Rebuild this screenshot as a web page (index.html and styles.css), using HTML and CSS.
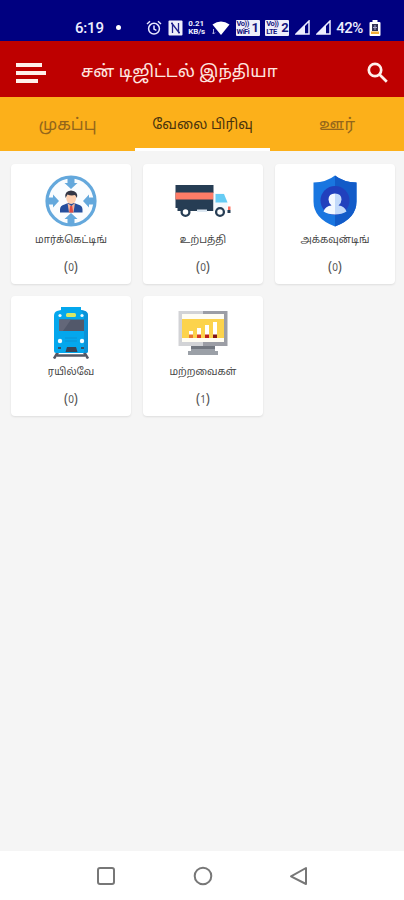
FILE: index.html
```html
<!DOCTYPE html>
<html lang="ta">
<head>
<meta charset="utf-8">
<title>சன் டிஜிட்டல் இந்தியா</title>
<link rel="stylesheet" href="styles.css">
</head>
<body>
<div class="status">
  <span class="time">6:19</span>
  <span class="dot"></span>
  <div class="status-icons">
    <svg width="16" height="16" viewBox="0 0 16 16" fill="none" stroke="#e8e8ff" stroke-width="1.5"><circle cx="8" cy="8.7" r="5.4"/><path d="M1 4l3-2.7M15 4l-3-2.7M8 5.5v3.6l2.4 1.3"/></svg>
    <svg width="15" height="16" viewBox="0 0 15 16"><rect x=".5" y=".5" width="14" height="15" rx="1" fill="#eeeefa"/><path d="M4.500 13V4l6 8V3M3 3.500h2M10 12.500h2" fill="none" stroke="#20208c" stroke-width="1.300"/></svg>
    <span class="speed"><b>0.21</b><b>KB/s</b></span>
    <svg width="18" height="14" viewBox="0 0 18 14"><path d="M.5 3.500Q9-2.500 17.500 3.500L9 14z" fill="#fff"/><path d="M1.500 8v5M0 11.500l1.500 1.500L3 11.500" stroke="#aaaada" fill="none"/></svg>
    <span class="volte"><span><b>Vo))</b><b>WiFi</b></span><i>1</i></span>
    <span class="volte"><span><b>Vo))</b><b>LTE</b></span><i>2</i></span>
    <svg width="15" height="15" viewBox="0 0 15 15"><path d="M14 1v13H1z" fill="none" stroke="#eeeeff" stroke-width="1.500"/><path d="M10 5v9H1z" fill="#eeeeff"/></svg>
    <svg width="15" height="15" viewBox="0 0 15 15"><path d="M14 1v13H1z" fill="none" stroke="#eeeeff" stroke-width="1.500"/><path d="M10 5v9H1z" fill="#eeeeff"/></svg>
    <span class="percent">42%</span>
    <svg width="12" height="16" viewBox="0 0 12 16"><path d="M3.500 0h5v2h2q1 0 1 1v12q0 1-1 1h-9q-1 0-1-1V3q0-1 1-1h2z" fill="#fff"/><path d="M3 4h6v7H3z" fill="#333354"/><path d="M2 11.500h8V14H2z" fill="#f3ae38"/><path d="M6 5v5M4 7.500h4" stroke="#aaaacb"/></svg>
  </div>
</div>
<header class="bar">
  <div class="menu"><i></i><i></i><i></i></div>
  <h1>சன் டிஜிட்டல் இந்தியா</h1>
  <svg class="search" width="22" height="22" viewBox="0 0 22 22" fill="none" stroke="#fff0eb" stroke-width="2.700"><circle cx="8" cy="8" r="6.200"/><path d="M12.500 12.500l7.300 7.300"/></svg>
</header>
<nav class="tabs">
  <div class="tab">முகப்பு</div>
  <div class="tab active">வேலை பிரிவு</div>
  <div class="tab">ஊர்</div>
</nav>
<main class="grid">
  <div class="card">
    <svg width="52" height="52" viewBox="0 0 52 52"><circle cx="26" cy="26" r="24" fill="#fafcfe" stroke="#64a8dc" stroke-width="3.200"/><g fill="#64a8dc"><path id="arrow" d="M22.500 2h7v6h3L26 14l-6.500-6h3z"/><use href="#arrow" transform="rotate(90 26 26)"/><use href="#arrow" transform="rotate(180 26 26)"/><use href="#arrow" transform="rotate(270 26 26)"/></g><path d="M15 37.500v-3q0-4 4.500-5L23 28h6l4 1.500q4.500 1 4.500 5v3z" fill="#254e9d"/><path d="M22.500 28l3.800 3 3.700-3-1.500 9.500h-4.500z" fill="#f0b29c"/><path d="M25.200 31h2l1 6.500h-4z" fill="#df4c45"/><ellipse cx="26.200" cy="23" rx="5" ry="6" fill="#ffd0b0"/><path d="M20.500 23q-1.500-7 5.500-7.500 7.500.5 6 7.500l-2-3q-4 1-7.500-.5z" fill="#353745"/></svg>
    <p>மார்க்கெட்டிங்</p><small>(<b>0</b>)</small>
  </div>
  <div class="card">
    <svg width="56" height="52" viewBox="0 0 56 52"><path d="M.5 10h38v26H2.500v-3h-2z" fill="#263d54"/><path d="M.5 17.500h38v7H.5z" fill="#ff7c67"/><path d="M38.500 18h10l4 9v9h-14z" fill="#f5f9fc"/><path d="M40.500 19h8.500l3.500 8.500h-12z" fill="#66ccf4"/><path d="M22 34.500h10v2.500H22z" fill="#dce7f1"/><g fill="#fff" stroke="#263d54" stroke-width="2.300"><circle cx="10.500" cy="37" r="3.900"/><circle cx="45" cy="37" r="3.900"/></g><path d="M53 31.500h2.500V35H53z" fill="#ff705f"/><path d="M52.500 35h3v3h-3z" fill="#263d54"/></svg>
    <p>உற்பத்தி</p><small>(<b>0</b>)</small>
  </div>
  <div class="card">
    <svg width="44" height="52" viewBox="0 0 44 52"><path d="M22 .5q8 6.500 21.500 7v19q0 17-21.500 25Q.5 43.500.5 26.500v-19Q14 7 22 .5z" fill="#1976e0"/><path d="M22 .5q8 6.500 21.500 7v19q0 17-21.500 25z" fill="#125bc8"/><circle cx="22" cy="25.500" r="14.500" fill="#2140bd"/><path d="M22 18.500q-6.500 0-6.500 6 0 3.500 3 6-6 .5-8 6Q15 39.500 22 39.500z" fill="#f2f8ff"/><path d="M22 18.500q6.500 0 6.500 6 0 3.500-3 6 6 .5 8 6Q29 39.500 22 39.500z" fill="#c3dafa"/></svg>
    <p>அக்கவுன்டிங்</p><small>(<b>0</b>)</small>
  </div>
  <div class="card">
    <svg width="36" height="52" viewBox="0 0 36 52"><path d="M5 45l-4 6.500M31 45l4 6.500M4 48.500h28" stroke="#555866" stroke-width="2.600"/><path d="M8 0h20v3l4 1q3 1 3 5v35q0 2-2 2H3q-2 0-2-2V9q0-4 3-5l4-1z" fill="#04a7ed"/><path d="M28 3l4 1q3 1 3 5v35q0 2-2 2h-2V8z" fill="#0b92d7"/><path d="M6 12.500h25V24H6z" fill="#52586a"/><path d="M6 12.500h12L10 24H6z" fill="#636779"/><rect x="13" y="6" width="10" height="4" rx="1.500" fill="#d8e867"/><g fill="#f1fbff"><circle cx="7" cy="8.500" r="1.600"/><circle cx="29" cy="8.500" r="1.600"/><circle cx="7" cy="34" r="2.200"/><circle cx="29" cy="34" r="2.200"/></g><path d="M14 40h9l1.500 5h-12z" fill="#3b4354"/><path d="M5 40h3v2H5zM28 40h3v2h-3z" fill="#345068"/><path d="M12 31h12M12 34h12" stroke="#0b93d5"/></svg>
    <p>ரயில்வே</p><small>(<b>0</b>)</small>
  </div>
  <div class="card">
    <svg width="50" height="52" viewBox="0 0 50 52"><path d="M.5 4h25v35H.500z" fill="#d2d3d6"/><path d="M25 4h24.500v35H25z" fill="#9c9ea5"/><path d="M4 7h42v28H4z" fill="#fffdf3"/><path d="M4 12h42v19H4z" fill="#fcd34c"/><path d="M13 39h24v5h3v4H10v-4h3z" fill="#9ba0a7"/><path d="M13 39h24v3H13z" fill="#72777f"/><g fill="#fff"><path d="M11 24h4v4h-4zM19 21h4v7h-4zM27 18h4v10h-4zM35 15h4v13h-4z"/></g><path d="M11 27.500h4V31h-4z" fill="#e87630"/><path d="M19 27.500h4V31h-4z" fill="#d73a26"/><path d="M27 27.500h4V31h-4z" fill="#b91f1c"/><path d="M35 27.500h4V31h-4z" fill="#811516"/></svg>
    <p>மற்றவைகள்</p><small>(<b>1</b>)</small>
  </div>
</main>
<footer class="nav">
  <svg width="20" height="20" viewBox="0 0 20 20"><rect x="2" y="2" width="16" height="16" rx="2"/></svg>
  <svg width="20" height="20" viewBox="0 0 20 20"><circle cx="10" cy="10" r="8.300"/></svg>
  <svg width="20" height="20" viewBox="0 0 20 20"><path d="M17 2v16L2 10.300z" stroke-linejoin="round"/></svg>
</footer>
</body>
</html>
```
FILE: styles.css
```css
* { box-sizing: border-box; }
body { margin: 0; width: 404px; height: 900px; display: flex; flex-direction: column; background: #f5f5f5; font-family: "Noto Sans", "Noto Sans Tamil", Roboto, sans-serif; overflow: hidden; }
svg { display: block; flex: none; }
.status { height: 41px; flex: none; background: #000080; color: #eeeeff; display: flex; align-items: center; padding: 14px 23px 0 75px; font: 500 15px Roboto, sans-serif; }
.time { width: 41px; letter-spacing: -.2px; }
.dot { width: 5px; height: 5px; border-radius: 50%; background: #fff; }
.status-icons { display: flex; align-items: center; margin-left: auto; gap: 5.7px; }
.speed { width: 18px; display: flex; flex-direction: column; font-size: 8px; line-height: 8px; letter-spacing: -.1px; }
.volte { display: flex; align-items: center; width: 24px; height: 16px; padding-left: 1px; background: #eeeefa; color: #15157f; border-radius: 1px; }
.volte span { display: flex; flex-direction: column; font-size: 7.5px; line-height: 7.5px; letter-spacing: -.5px; width: 15px; }
.volte i { font: 700 13px Roboto, sans-serif; }
.percent { width: 27px; letter-spacing: -.5px; }
.bar { height: 56px; flex: none; background: #be0000; display: flex; align-items: center; padding: 0 16px; }
.menu { width: 65px; display: flex; flex-direction: column; gap: 4px; padding-top: 7px; }
.menu i { height: 4px; width: 26px; background: #fff0eb; }
.menu i:nth-child(2) { width: 30px; }
.menu i:nth-child(3) { width: 22px; }
h1 { margin: 4px 0 0; font-size: 17px; font-weight: 400; color: #ffe7e0; white-space: nowrap; flex: 1; }
.search { margin: 7px -1px 0 0; }
.tabs { height: 54px; flex: none; display: grid; grid-template-columns: 135px 135px 134px; background: #fcb01a; }
.tab { display: flex; align-items: center; justify-content: center; padding-top: 3px; font-size: 16.5px; color: #93661b; white-space: nowrap; border-bottom: 3px solid #fcb01a; }
.active { color: #49330d; border-color: #fff; font-size: 14px; }
.grid { flex: 1; display: grid; grid-template-columns: repeat(3, 120px); grid-auto-rows: 120px; gap: 12px; padding: 13px 11px; align-content: start; }
.card { background: #fff; border-radius: 4px; box-shadow: 0 1px 2px #ddd; display: flex; flex-direction: column; align-items: center; padding-top: 11px; color: #444; }
.card p { margin: 4px 0 0; height: 17px; line-height: 17px; font-size: 10px; white-space: nowrap; }
.card small { margin-top: 10px; font: 13.5px/17px "Noto Sans", sans-serif; color: #555; }
.card b { font-weight: 400; font-size: 10px; }
.nav { height: 49px; flex: none; background: #fff; display: flex; align-items: center; justify-content: space-between; padding: 0 95px 0 96px; }
.nav svg { fill: none; stroke: #777; stroke-width: 2; }
```
